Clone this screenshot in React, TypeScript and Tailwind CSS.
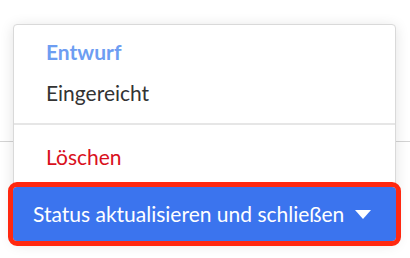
export default function App() {
  return (
    <div
      className="relative h-[258px] w-[410px] overflow-hidden bg-white"
      style={{ fontFamily: 'Lato, "Noto Sans", sans-serif' }}
    >
      {/* line of the page behind the menu */}
      <div className="absolute left-0 right-0 top-[141px] h-px bg-[#d4d4d4]" />

      <div className="relative ml-[13px] mt-[24px] w-[383px] rounded-[4px] border border-[#d9d9d9] bg-white shadow-[0_2px_14px_rgba(0,0,0,0.12)]">
        <div className="pt-[6px]">
          <div className="flex h-[41px] items-center px-[32px] text-[21px] font-bold text-[#6d9df2]">
            Entwurf
          </div>
          <div className="flex h-[41px] items-center px-[32px] text-[21px] text-[#333333]">
            Eingereicht
          </div>
        </div>
        <div className="mt-[10px] h-[2px] bg-[#e6e6e6]" />
        <div className="mt-[11px] flex h-[41px] items-center px-[32px] text-[21px] text-[#d9101c]">
          Löschen
        </div>
        <button className="mt-[10px] -mx-px flex h-[54px] w-[383px] items-center justify-between rounded-[4px] bg-[#3b74ee] pl-[20px] pr-[25px] text-[21px] text-white outline-[5px] outline-[#ff2810] outline-solid">
          <span>Status aktualisieren und schließen</span>
          <svg width="16" height="9" viewBox="0 0 16 9">
            <path d="M0 0h16L8 9z" fill="white" />
          </svg>
        </button>
      </div>
    </div>
  )
}
